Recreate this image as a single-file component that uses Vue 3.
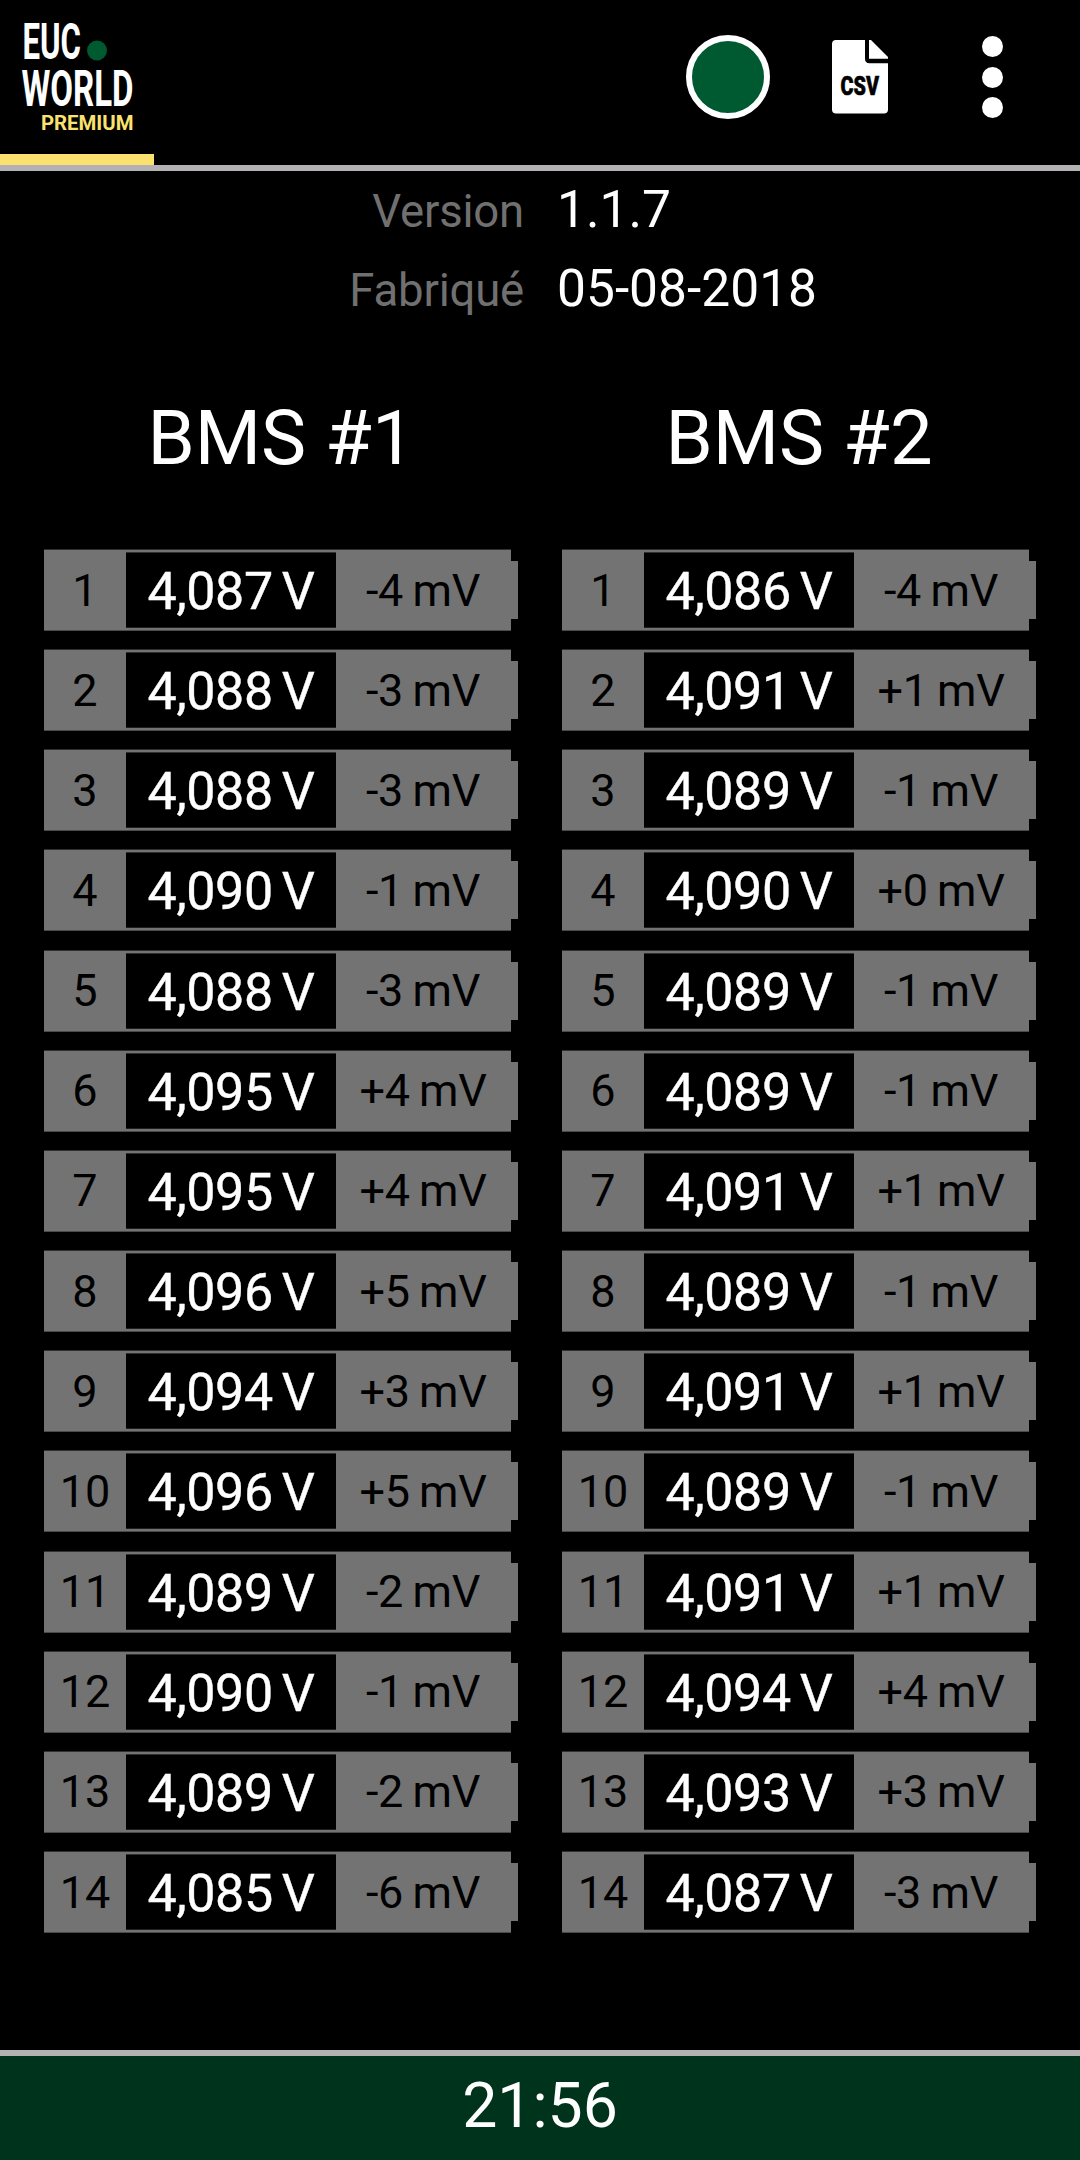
<template>
  <div class="screen">

    <!-- ===== Header ===== -->
    <header class="header">
      <svg class="logo" width="154" height="154" viewBox="0 0 154 154">
        <g fill="#fff" font-weight="700" font-size="50.5">
          <text x="22.500" y="59" textLength="58.500" lengthAdjust="spacingAndGlyphs">EUC</text>
          <text x="21.500" y="106" textLength="112" lengthAdjust="spacingAndGlyphs">WORLD</text>
        </g>
        <circle cx="97" cy="50.500" r="10" fill="#005a31" />
        <text
          x="41" y="129.500" fill="#fbe26f" font-weight="700" font-size="21"
          textLength="92.500" lengthAdjust="spacingAndGlyphs"
        >PREMIUM</text>
      </svg>

      <div class="actions">
        <span class="status"></span>

        <svg class="csv" width="56" height="74" viewBox="0 0 56 74">
          <path fill="#fff" d="M4 0H33V18.500Q33 23.300 37.500 23.300H56V69.500Q56 73.500 52 73.500H4Q0 73.500 0 69.500V4Q0 0 4 0Z" />
          <path fill="#fff" d="M37 0H39L56 17V18.800H37Z" />
          <text
            x="8.500" y="54.500" fill="#000" font-weight="900" font-size="25"
            stroke="#000" stroke-width="0.600" stroke-linejoin="round"
            textLength="38.500" lengthAdjust="spacingAndGlyphs"
          >CSV</text>
        </svg>

        <div class="menu">
          <i></i><i></i><i></i>
        </div>
      </div>
    </header>
    <div class="progress"></div>

    <!-- ===== Info + cells ===== -->
    <main class="main">
      <div class="info">
        <div class="info-row" v-for="item in info" :key="item.label">
          <span class="label">{{ item.label }}</span>
          <span class="value">{{ item.value }}</span>
        </div>
      </div>

      <div class="packs">
        <section class="pack" v-for="pack in packs" :key="pack.name">
          <h2>{{ pack.name }}</h2>
          <div class="cells">
            <div class="cell" v-for="(cell, i) in pack.cells" :key="i">
              <div class="body">
                <span class="index">{{ i + 1 }}</span>
                <span class="voltage">{{ cell[0] }} V</span>
                <span class="delta">{{ cell[1] }} mV</span>
              </div>
              <div class="tip"></div>
            </div>
          </div>
        </section>
      </div>
    </main>

    <!-- ===== Clock ===== -->
    <footer class="footer">21:56</footer>
  </div>
</template>

<script setup>
const info = [
  { label: 'Version', value: '1.1.7' },
  { label: 'Fabriqué', value: '05-08-2018' }
]

const packs = [
  {
    name: 'BMS #1',
    cells: [
      ['4,087', '-4'], ['4,088', '-3'], ['4,088', '-3'], ['4,090', '-1'],
      ['4,088', '-3'], ['4,095', '+4'], ['4,095', '+4'], ['4,096', '+5'],
      ['4,094', '+3'], ['4,096', '+5'], ['4,089', '-2'], ['4,090', '-1'],
      ['4,089', '-2'], ['4,085', '-6']
    ]
  },
  {
    name: 'BMS #2',
    cells: [
      ['4,086', '-4'], ['4,091', '+1'], ['4,089', '-1'], ['4,090', '+0'],
      ['4,089', '-1'], ['4,089', '-1'], ['4,091', '+1'], ['4,089', '-1'],
      ['4,091', '+1'], ['4,089', '-1'], ['4,091', '+1'], ['4,094', '+4'],
      ['4,093', '+3'], ['4,087', '-3']
    ]
  }
]
</script>

<style>
body {
  background: #000;
}
</style>

<style scoped>
.screen {
  display: flex;
  flex-direction: column;
  width: 1080px;
  height: 2160px;
  background: #000;
  color: #fff;
  font-family: Roboto, "Liberation Sans", sans-serif;
  overflow: hidden;
}

/* ===== Header ===== */
.header {
  display: flex;
  justify-content: space-between;
  height: 154px;
}

.logo,
.csv {
  overflow: visible;
}

.actions {
  display: flex;
  align-items: center;
  height: 154px;
  padding-right: 77px;
}

.status {
  box-sizing: border-box;
  width: 84px;
  height: 84px;
  margin-right: 62px;
  border: 6px solid #fff;
  border-radius: 50%;
  background: #005a31;
}

.csv {
  margin-right: 94px;
}

.menu {
  display: flex;
  flex-direction: column;
  gap: 9.5px;
}

.menu i {
  width: 21px;
  height: 21px;
  border-radius: 50%;
  background: #fff;
}

.progress {
  width: 154px;
  height: 11px;
  background: #fbe26f;
}

/* ===== Info ===== */
.main {
  flex: 1;
  border-top: 6px solid #b3b1b3;
}

.info-row {
  display: flex;
  align-items: baseline;
  gap: 33px;
  height: 79px;
  line-height: 77px;
}

.label {
  width: 524px;
  text-align: right;
  font-size: 45.5px;
  letter-spacing: -0.2px;
  color: #707070;
}

.value {
  font-size: 51.5px;
}

/* ===== Packs ===== */
.packs {
  display: flex;
  gap: 44px;
  padding: 0 44px;
}

.pack {
  width: 474px;
}

.pack h2 {
  margin: 62px 0 64px;
  line-height: 94px;
  text-align: center;
  font-size: 76px;
  font-weight: 400;
}

.cells {
  display: flex;
  flex-direction: column;
  gap: 18.17px;
}

.cell {
  display: flex;
  align-items: center;
  height: 82px;
}

.body {
  box-sizing: border-box;
  display: grid;
  grid-template-columns: 82px 210px 175px;
  align-items: center;
  height: 82px;
  border-top: 1px solid #303030;
  border-bottom: 1px solid #4a4a4a;
  background: #737373;
  text-align: center;
}

.index,
.delta {
  font-size: 45px;
  color: #000;
}

.delta {
  padding-right: 1px;
  letter-spacing: -0.3px;
  word-spacing: -1.5px;
}

.voltage {
  box-sizing: border-box;
  height: 76px;
  border-top: 1px solid #303030;
  border-bottom: 1px solid #202020;
  background: #000;
  line-height: 77px;
  font-size: 52px;
  letter-spacing: -0.4px;
  word-spacing: -3.5px;
  -webkit-text-stroke: 0.4px #fff;
}

.tip {
  width: 7px;
  height: 58px;
  background: #737373;
}

/* ===== Footer ===== */
.footer {
  box-sizing: border-box;
  height: 110px;
  border-top: 6px solid #b3b1b3;
  background: #00331c;
  line-height: 100px;
  text-align: center;
  font-size: 62.5px;
}
</style>
